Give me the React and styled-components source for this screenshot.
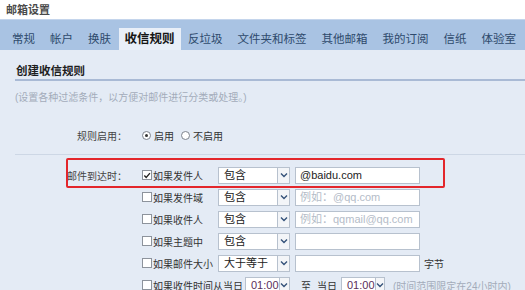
import React from "react";
import styled, { createGlobalStyle } from "styled-components";

const GlobalStyle = createGlobalStyle`
  html, body {
    margin: 0;
    padding: 0;
    background: #e4ebf5;
  }
  body {
    font-family: "Liberation Sans", "Noto Sans CJK SC", sans-serif;
    overflow: hidden;
  }
`;

const tabs = ["常规", "帐户", "换肤", "收信规则", "反垃圾", "文件夹和标签", "其他邮箱", "我的订阅", "信纸", "体验室"];

const conditions = [
  { label: "如果发件人", op: "包含", value: "@baidu.com", checked: true },
  { label: "如果发件域", op: "包含", hint: "例如：@qq.com" },
  { label: "如果收件人", op: "包含", hint: "例如：qqmail@qq.com" },
  { label: "如果主题中", op: "包含" },
  { label: "如果邮件大小", op: "大于等于", unit: "字节" },
];

const Chevron = () => (
  <svg width="8" height="6" viewBox="0 0 8 6">
    <path d="M1 1.5 L4 4.5 L7 1.5" fill="none" stroke="#34527a" strokeWidth="1.4" />
  </svg>
);

const Tick = () => (
  <svg width="9" height="9" viewBox="0 0 9 9">
    <path d="M1.5 4.5 L3.6 6.8 L7.8 1.8" fill="none" stroke="#222" strokeWidth="1.5" />
  </svg>
);

const Dropdown = ({ value, width, $time }) => (
  <SelectBox $w={width}>
    <SelectValue $time={$time}>{value}</SelectValue>
    <SelectArrow>
      <Chevron />
    </SelectArrow>
  </SelectBox>
);

const App = () => (
  <Page>
    <GlobalStyle />
    <TitleBar>邮箱设置</TitleBar>
    <TabBar>
      {tabs.map((t) => (
        <Tab key={t} $active={t === "收信规则"}>{t}</Tab>
      ))}
    </TabBar>
    <Content>
      <Heading>创建收信规则</Heading>
      <Hint>(设置各种过滤条件，以方便对邮件进行分类或处理。)</Hint>
      <FieldRow $top={18}>
        <FieldLabel>规则启用：</FieldLabel>
        <Cell>
          <Radio $on />
          <OptionText>启用</OptionText>
          <Radio $gap />
          <OptionText>不启用</OptionText>
        </Cell>
      </FieldRow>
      <Divider />
      {conditions.map((c, i) => (
        <FieldRow key={c.label} $marked={i === 0}>
          <FieldLabel>{i === 0 ? "邮件到达时：" : ""}</FieldLabel>
          <Cell>
            <Checkbox>{c.checked && <Tick />}</Checkbox>
            <CondText>{c.label}</CondText>
            <Dropdown value={c.op} width={72} />
            <TextBox $hint={!c.value}>{c.value || c.hint || ""}</TextBox>
            {c.unit && <Unit>{c.unit}</Unit>}
          </Cell>
        </FieldRow>
      ))}
      <FieldRow>
        <FieldLabel />
        <Cell>
          <Checkbox />
          <CondText>如果收件时间从当日</CondText>
          <Dropdown value="01:00" width={45} $time />
          <Unit $gap={11}>至</Unit>
          <Unit $gap={6}>当日</Unit>
          <Spacer />
          <Dropdown value="01:00" width={44} $time />
          <Note>(时间范围限定在24小时内)</Note>
        </Cell>
      </FieldRow>
    </Content>
  </Page>
);

const Page = styled.div`
  width: 525px;
  height: 290px;
  overflow: hidden;
`;

const TitleBar = styled.div`
  height: 19px;
  box-sizing: border-box;
  padding: 2px 0 0 6px;
  background: #fff;
  font-size: 11px;
  line-height: 17px;
  font-weight: 700;
  color: #4a4a4a;
`;

const TabBar = styled.div`
  height: 31px;
  box-sizing: border-box;
  display: flex;
  align-items: flex-end;
  padding-left: 4.5px;
  background: #a9c3e3;
  border-top: 1px solid #c4d5ec;
`;

const Tab = styled.div`
  height: 22px;
  line-height: 22px;
  padding: 0 ${(p) => (p.$active ? "6px" : "7.5px")};
  font-size: ${(p) => (p.$active ? "12.5px" : "11.5px")};
  font-weight: ${(p) => (p.$active ? 700 : 400)};
  color: ${(p) => (p.$active ? "#151515" : "#2e4a6c")};
  background: ${(p) => (p.$active ? "#e9eff8" : "transparent")};
  white-space: nowrap;
`;

const Content = styled.div`
  min-height: 240px;
  padding-left: 15px;
  background: #e4ebf5;
`;

const Heading = styled.div`
  padding: 13px 0 0 1px;
  line-height: 16px;
  font-size: 11.5px;
  font-weight: 700;
  color: #1e1e1e;
  border-bottom: 2px solid #a9bad5;
`;

const Hint = styled.div`
  margin-top: 9px;
  line-height: 16px;
  font-size: 10px;
  color: #a3abba;
`;

const FieldRow = styled.div`
  position: relative;
  display: grid;
  grid-template-columns: 112px 1fr;
  column-gap: 15px;
  align-items: center;
  height: 22px;
  margin-top: ${(p) => (p.$top ? `${p.$top}px` : "0")};

  &::after {
    content: "";
    display: ${(p) => (p.$marked ? "block" : "none")};
    position: absolute;
    left: 51px;
    right: 80px;
    top: -6px;
    bottom: -2px;
    border: 2px solid #e3262b;
    border-radius: 2px;
    pointer-events: none;
  }
`;

const FieldLabel = styled.div`
  text-align: right;
  font-size: 10px;
  color: #444;
  white-space: nowrap;
`;

const Cell = styled.div`
  display: flex;
  align-items: center;
  white-space: nowrap;
`;

const Radio = styled.span`
  width: 9px;
  height: 9px;
  box-sizing: border-box;
  border-radius: 50%;
  border: 1px solid #7d838d;
  background: #fff;
  margin-left: ${(p) => (p.$gap ? "7px" : "0")};
  display: flex;
  align-items: center;
  justify-content: center;

  &::before {
    content: "";
    width: 3px;
    height: 3px;
    border-radius: 50%;
    background: #333;
    display: ${(p) => (p.$on ? "block" : "none")};
  }
`;

const OptionText = styled.span`
  margin-left: 3px;
  font-size: 10px;
  color: #333;
`;

const Divider = styled.div`
  height: 1px;
  margin: 8px 0 9px;
  background: #cdd7e5;
`;

const Checkbox = styled.span`
  width: 10px;
  height: 10px;
  box-sizing: border-box;
  border: 1px solid #8d939c;
  background: #fff;
  margin-right: 1px;
  display: flex;
  align-items: center;
  justify-content: center;
`;

const CondText = styled.span`
  min-width: 63px;
  margin-right: 2px;
  font-size: 10px;
  color: #333;
`;

const SelectBox = styled.div`
  display: flex;
  width: ${(p) => p.$w}px;
  height: 17px;
  box-sizing: border-box;
  border: 1px solid #b7c1ce;
  background: #fff;
`;

const SelectValue = styled.span`
  flex: 1;
  padding-left: 5px;
  font-size: 11px;
  line-height: 15px;
  color: ${(p) => (p.$time ? "#5a2e5a" : "#222")};
`;

const SelectArrow = styled.span`
  width: 11px;
  border-left: 1px solid #b7c1ce;
  background: #f3f5f8;
  display: flex;
  align-items: center;
  justify-content: center;
`;

const TextBox = styled.div`
  width: 125px;
  height: 17px;
  box-sizing: border-box;
  margin-left: 5px;
  padding-left: 4px;
  border: 1px solid #b7c1ce;
  background: #fff;
  font-size: 11px;
  line-height: 15px;
  color: ${(p) => (p.$hint ? "#b4bcc8" : "#222")};
`;

const Unit = styled.span`
  margin-left: ${(p) => (p.$gap ? `${p.$gap}px` : "4px")};
  font-size: 10px;
  color: #333;
`;

const Spacer = styled.span`
  width: 4px;
`;

const Note = styled.span`
  margin-left: 8px;
  font-size: 10px;
  color: #a3abba;
`;

export default App;
